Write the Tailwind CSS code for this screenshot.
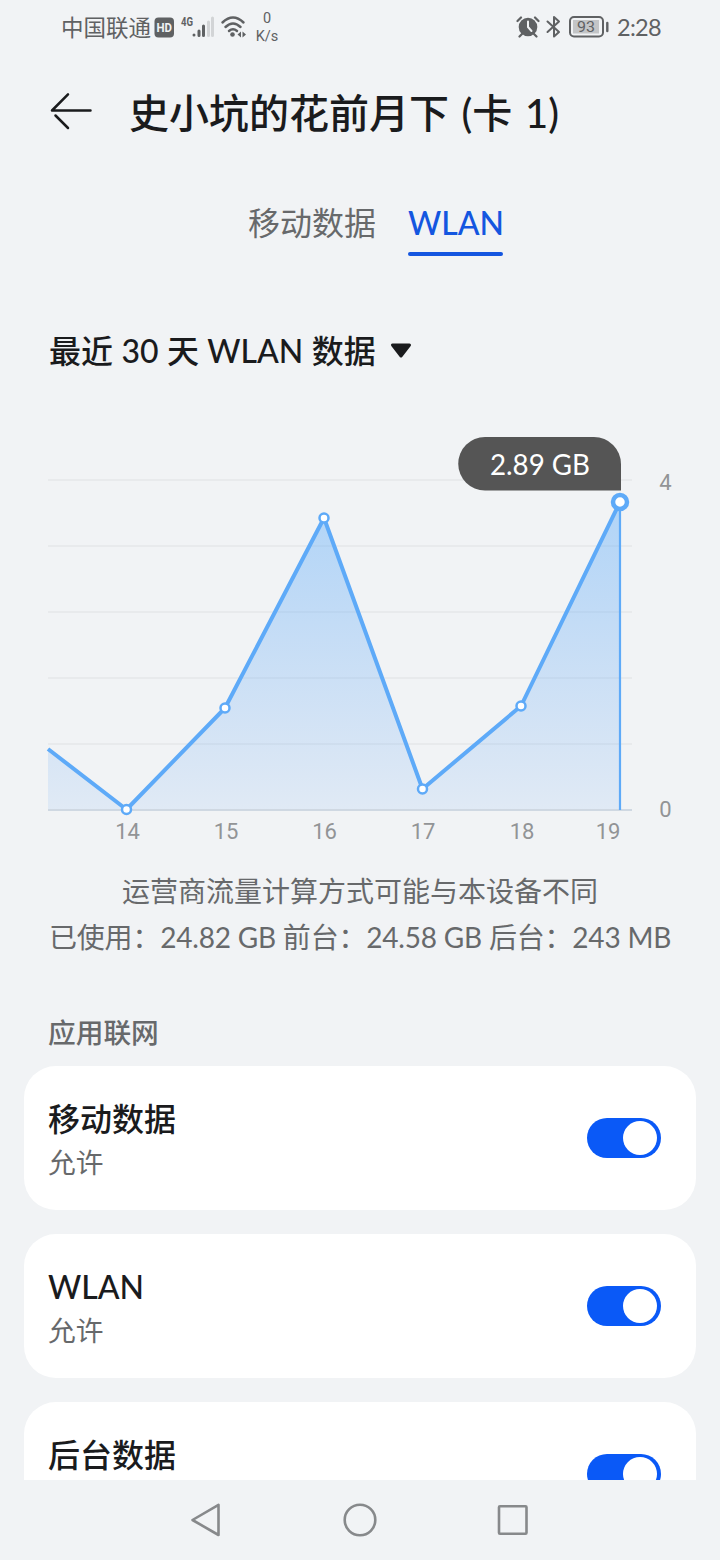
<!DOCTYPE html>
<html lang="zh-CN">
<head>
<meta charset="utf-8">
<meta name="viewport" content="width=device-width, initial-scale=1">
<title>WLAN</title>
<script src="https://cdn.jsdelivr.net/npm/@tailwindcss/browser@4"></script>
</head>
<body class="w-[720px] h-[1560px] overflow-hidden bg-[#f1f3f5] font-['Lato','Noto_Sans_CJK_SC',sans-serif] text-[#1a1b1d]">
<div class="flex h-[1560px] w-[720px] flex-col">
  <header class="flex h-14 shrink-0 items-center pl-[61px] pr-[59px] text-[#5f6163]">
    <span class="w-[93px] pt-px text-[22.5px] leading-none whitespace-nowrap">中国联通</span>
    <svg class="block h-14 w-[92px]" viewBox="154 0 92 56">
      <rect x="154.500" y="17.500" width="19.500" height="20" rx="4" fill="#5f6163"/>
      <text x="156.500" y="32.200" font-family="Roboto" font-weight="700" font-size="13" textLength="15.500" lengthAdjust="spacingAndGlyphs" fill="#f1f3f5">HD</text>
      <text x="181" y="26" font-family="Roboto" font-weight="700" font-size="12.500" textLength="12" lengthAdjust="spacingAndGlyphs" fill="#5f6163">4G</text>
      <g stroke-width="3" stroke-linecap="round">
        <path d="M194 35v.1M199 31v4.500M203.500 26v9.500" stroke="#5f6163"/>
        <path d="M208.500 22v13.500M212.500 18v17.500" stroke="#d2d4d6"/>
      </g>
      <g fill="none" stroke="#5f6163" stroke-width="2.500" stroke-linecap="round">
        <path d="M222.500 22.500Q233 12.500 243.500 22.500M225.500 27Q233 20 240.500 27M229 31Q233 27.500 237 31"/>
      </g>
      <circle cx="232.500" cy="34.500" r="2.300" fill="#5f6163"/>
      <path d="M241 31.500v6l-3.500-3zM242.500 31.500v6l3.500-3z" fill="#5f6163"/>
    </svg>
    <div class="ml-[6px] flex w-[30px] flex-col items-center font-['Roboto'] text-[14.500px] leading-[18px]"><span>0</span><span>K/s</span></div>
    <div class="ml-auto flex items-center">
      <svg class="block h-14 w-[96px]" viewBox="516 0 96 56">
        <circle cx="528" cy="27" r="9.300" fill="#5f6163"/>
        <path d="M517.500 21l3.500-3.500M538.500 21l-3.500-3.500M522 34l-2.500 2.500M534 34l2.500 2.500" stroke="#5f6163" stroke-width="2.200" stroke-linecap="round"/>
        <path d="M528 21.500v5.500l3.500 4" fill="none" stroke="#f1f3f5" stroke-width="2" stroke-linecap="round"/>
        <path d="M547.500 21.500L559 32l-5 4.500V17l5 4.500-11.500 10.500" fill="none" stroke="#5f6163" stroke-width="2" stroke-linecap="round" stroke-linejoin="round"/>
        <rect x="570" y="17" width="33" height="19.500" rx="4" fill="none" stroke="#5f6163" stroke-width="2"/>
        <rect x="573" y="20" width="26" height="13.500" fill="#c3c5c7"/>
        <text x="577" y="32.300" font-family="Roboto" font-size="15.500" textLength="18" lengthAdjust="spacingAndGlyphs" fill="#5f6163">93</text>
        <path d="M607.300 23v8" stroke="#5f6163" stroke-width="2.400" stroke-linecap="round"/>
      </svg>
      <span class="ml-[5px] w-[44px] text-[23.500px] leading-none tracking-[-0.7px] whitespace-nowrap">2:28</span>
    </div>
  </header>

  <div class="flex h-[110px] shrink-0 items-center pl-[50px]">
    <svg class="block h-10 w-[44px]" viewBox="50 90 44 40" fill="none" stroke="#1a1b1d" stroke-width="2.500" stroke-linecap="round" stroke-linejoin="round">
      <path d="M90.500 109.500H52M68 93.300L52 109.500M55.500 114.500L68 127"/>
    </svg>
    <h1 class="mt-[3px] ml-[35px] text-[40px] leading-none font-medium whitespace-nowrap [word-spacing:2.500px]">史小坑的花前月下 (卡 1)</h1>
  </div>

  <nav class="flex h-[122px] shrink-0 gap-8 pt-[29px] pl-[248px] text-[32px] leading-[56px]">
    <span class="text-[#67696b]">移动数据</span>
    <span class="flex h-[61px] w-[95px] flex-col justify-between whitespace-nowrap text-[#1456e0]"><span class="h-[56px] font-medium">WLAN</span><span class="h-1 w-full shrink-0 rounded-full bg-[#1456e0]"></span></span>
  </nav>

  <div class="flex h-[126px] shrink-0 items-center pl-[49px]">
    <h2 class="text-[32px] leading-none font-medium whitespace-nowrap [word-spacing:.3px]">最近 30 天 WLAN 数据</h2>
    <svg class="ml-[14px] block h-5 w-6" viewBox="0 0 24 20"><path d="M2.500 4h17l-8.500 11z" fill="#1a1b1d" stroke="#1a1b1d" stroke-width="3" stroke-linejoin="round"/></svg>
  </div>

  <svg class="block h-[436px] w-[720px] shrink-0" viewBox="0 414 720 436">
    <defs>
      <linearGradient id="area" gradientUnits="userSpaceOnUse" x1="0" y1="500" x2="0" y2="810">
        <stop offset="0" stop-color="#64b0fa" stop-opacity=".46"/>
        <stop offset="1" stop-color="#64a6f5" stop-opacity=".12"/>
      </linearGradient>
    </defs>
    <path d="M48 480H632M48 546H632M48 612H632M48 678H632M48 744H632" stroke="#e5e7e9" stroke-width="1.500"/>
    <path d="M48 749L126.500 809.500 225 708 324 518 422.500 789 521 706 620 502V810H48z" fill="url(#area)"/>
    <path d="M48 810H632" stroke="#cfd8e2" stroke-width="2"/>
    <path d="M620 502V810" stroke="#5eaaf8" stroke-width="2.200"/>
    <path d="M48 749L126.500 809.500 225 708 324 518 422.500 789 521 706 620 502" fill="none" stroke="#5eaaf8" stroke-width="4" stroke-linejoin="round"/>
    <g fill="#fff" stroke="#5eaaf8" stroke-width="2.500">
      <circle cx="126.500" cy="809.500" r="4.500"/><circle cx="225" cy="708" r="4.500"/><circle cx="324" cy="518" r="4.500"/><circle cx="422.500" cy="789" r="4.500"/><circle cx="521" cy="706" r="4.500"/>
      <circle cx="620" cy="502" r="7" stroke-width="4.500"/>
    </g>
    <path d="M485 437H594A27 27 0 0 1 621 464V490.500H485A26.750 26.750 0 0 1 485 437z" fill="#555"/>
    <text x="490" y="475" font-size="28.500" fill="#fff" textLength="100" lengthAdjust="spacingAndGlyphs">2.89 GB</text>
    <g font-family="Roboto" font-size="22" fill="#929496" text-anchor="middle">
      <text x="665.500" y="490">4</text><text x="665.500" y="817">0</text>
      <text x="127.500" y="839">14</text><text x="226" y="839">15</text><text x="324.500" y="839">16</text><text x="423" y="839">17</text><text x="522" y="839">18</text><text x="608" y="839">19</text>
    </g>
  </svg>

  <div class="flex h-[126px] shrink-0 flex-col pt-[18px] text-[28px] leading-[46px] whitespace-nowrap text-[#67696b]">
    <p class="text-center">运营商流量计算方式可能与本设备不同</p>
    <p class="pl-[49px] tracking-[-0.2px]">已使用：24.82 GB 前台：24.58 GB 后台：243 MB</p>
  </div>

  <main class="h-[504px] shrink-0 overflow-hidden px-6">
    <h3 class="flex h-[90px] items-center pt-[24px] pl-6 text-[27.700px] leading-none font-medium text-[#67696b]">应用联网</h3>
    <div class="flex flex-col gap-6">
      <section class="flex h-36 shrink-0 items-center justify-between rounded-[32px] bg-white pr-[35px] pl-6">
        <div class="pt-1"><div class="text-[32px] leading-[46px] font-medium">移动数据</div><div class="text-[27.700px] leading-[42px] text-[#67696b]">允许</div></div>
        <div class="flex h-10 w-[74px] items-center justify-end rounded-full bg-[#0a59f7] pr-1"><div class="size-[34px] rounded-full bg-white"></div></div>
      </section>
      <section class="flex h-36 shrink-0 items-center justify-between rounded-[32px] bg-white pr-[35px] pl-6">
        <div class="pt-1"><div class="text-[32px] leading-[46px] font-medium">WLAN</div><div class="text-[27.700px] leading-[42px] text-[#67696b]">允许</div></div>
        <div class="flex h-10 w-[74px] items-center justify-end rounded-full bg-[#0a59f7] pr-1"><div class="size-[34px] rounded-full bg-white"></div></div>
      </section>
      <section class="flex h-36 shrink-0 items-center justify-between rounded-[32px] bg-white pr-[35px] pl-6">
        <div class="h-[92px] pt-1"><div class="text-[32px] leading-[46px] font-medium">后台数据</div></div>
        <div class="flex h-10 w-[74px] items-center justify-end rounded-full bg-[#0a59f7] pr-1"><div class="size-[34px] rounded-full bg-white"></div></div>
      </section>
    </div>
  </main>

  <footer class="h-20 shrink-0 bg-[#f1f3f5]">
    <svg class="block h-20 w-[720px]" viewBox="0 1480 720 80" fill="none" stroke="#87898b" stroke-width="2.600" stroke-linejoin="round">
      <path d="M192.500 1520L218.500 1504.800V1535z"/>
      <circle cx="360" cy="1520" r="15.300"/>
      <rect x="499" y="1506.300" width="27.500" height="27.500" rx="1"/>
    </svg>
  </footer>
</div>
</body>
</html>
